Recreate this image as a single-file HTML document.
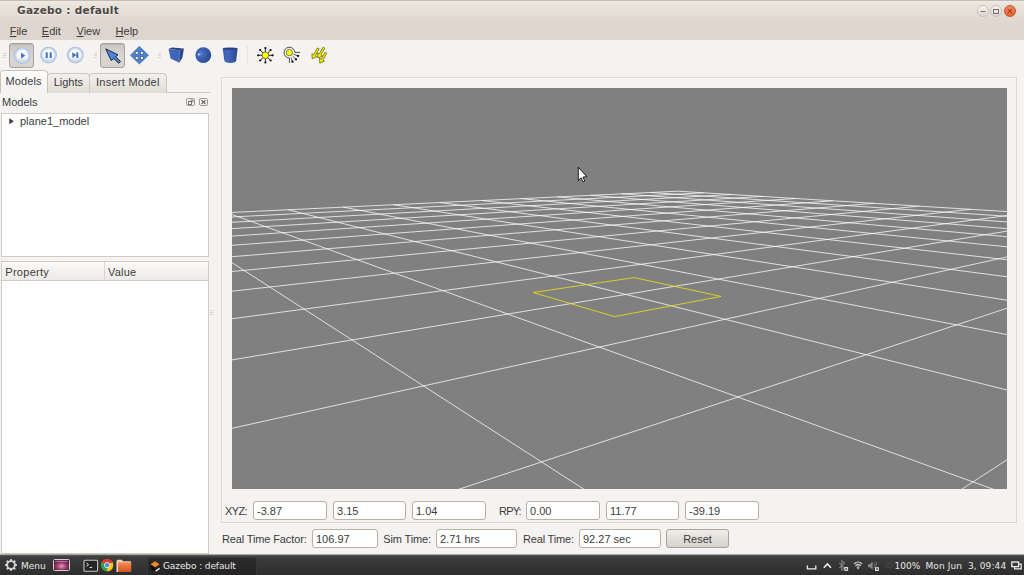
<!DOCTYPE html>
<html><head><meta charset="utf-8"><title>Gazebo : default</title>
<style>
*{box-sizing:border-box;margin:0;padding:0}
html,body{width:1024px;height:575px;overflow:hidden;background:#f4f3f1}
body{position:relative;font-family:"Liberation Sans",sans-serif;font-size:11px;color:#3c3c3c}
.a{position:absolute}
.t{position:absolute;white-space:pre;line-height:14px;height:14px}
#hdr{left:0;top:0;width:1024px;height:40px;background:linear-gradient(#bdb1a4 0,#cfc4b8 1px,#f4f2ee 1.6px,#eae7e0 2.6px,#e7e2da 8px,#e5ddd6 12px,#e0d8d1 19px,#dfd6cf 24px,#ded5ce 40px)}
#title{left:17px;top:3px;font-family:"DejaVu Sans","Liberation Sans",sans-serif;font-size:10.5px;letter-spacing:.28px;font-weight:bold;color:#4d4843;line-height:15px;height:15px;text-shadow:0 1px 0 rgba(255,255,255,.6)}
.mi{top:24px;color:#3c3c3c}
.mi u{text-decoration:underline;text-underline-offset:1px}
.wb{width:12px;height:12px;border-radius:50%;top:5.2px;border:1px solid #c9c2ba;background:linear-gradient(#f6f4f1,#dcd7d0)}
.btn{width:25px;height:25px;top:43px;border:1px solid #a8a29a;border-radius:3px;background:linear-gradient(#cbc7c2,#dad7d3 60%,#d6d3cf);box-shadow:inset 0 1px 1px rgba(0,0,0,.10)}
.grip{width:3px;height:6px;top:53px;background:repeating-linear-gradient(#d8d3cc 0,#d8d3cc 1px,transparent 1px,transparent 2px)}
.tab{top:73px;height:20px;border:1px solid #cfc8c0;border-bottom:none;border-radius:4px 4px 0 0;background:linear-gradient(#f2f0ed,#e9e6e1 55%,#dedad4)}
.tab.sel{top:70px;height:23px;background:linear-gradient(#fdfdfc,#f6f5f4 60%,#f4f3f1);border-color:#c9c2ba}
.box{background:#fff;border:1px solid #d2cbc3}
.inp{height:19px;border:1px solid #b9b0a6;border-radius:3px;background:#fff}
.inp span{position:absolute;left:3px;top:1.5px;line-height:14px;white-space:pre}
#vp{left:232px;top:88px;width:775px;height:401px;background:#808080;overflow:hidden}
.gl{position:absolute;left:0;top:0;display:block}
#tb{left:0;top:554px;width:1024px;height:21px;background:linear-gradient(#e4e3e1 0,#777675 .9px,#444 1.8px,#3c3c3c 4px,#2d2d2d 21px);font-family:"DejaVu Sans",sans-serif;font-size:9px;color:#e8e8e8}
#tb .t{line-height:12px;height:12px;top:6px}
</style></head><body>

<!-- header: title + menubar -->
<div class="a" id="hdr"></div>
<div class="t" id="title">Gazebo : default</div>
<div class="a wb" style="left:977px"><svg class="a" style="left:0;top:0" width="10" height="10"><path d="M2.5 5.5h5" stroke="#6b645c" stroke-width=".9" fill="none"/></svg></div>
<div class="a wb" style="left:990px"><svg class="a" style="left:0;top:0" width="10" height="10"><rect x="2.5" y="3.5" width="5" height="4" stroke="#6b645c" stroke-width=".9" fill="none"/></svg></div>
<div class="a wb" style="left:1004px;border-color:#c8532a;background:linear-gradient(#f08a5f,#e5602f)"><svg class="a" style="left:0;top:0" width="10" height="10"><path d="M2.7 2.7l4.6 4.6M7.3 2.7l-4.6 4.6" stroke="#8a3414" stroke-width=".9" fill="none"/></svg></div>
<div class="t mi" style="left:9.7px"><u>F</u>ile</div>
<div class="t mi" style="left:41.8px"><u>E</u>dit</div>
<div class="t mi" style="left:76.5px"><u>V</u>iew</div>
<div class="t mi" style="left:115.6px"><u>H</u>elp</div>

<!-- toolbar -->
<div class="a grip" style="left:3px"></div>
<div class="a btn" style="left:9px"></div>
<div class="a grip" style="left:94px"></div>
<div class="a btn" style="left:100px"></div>
<div class="a grip" style="left:158px"></div>
<div class="a" style="left:247px;top:46px;width:1px;height:18px;background:#e6e2dd"></div>
<svg class="a" style="left:0;top:40px" width="340" height="30" viewBox="0 40 340 30">
<defs>
<radialGradient id="gs" cx=".32" cy=".42" r=".75"><stop offset="0" stop-color="#5f86d6"/><stop offset=".25" stop-color="#4268bd"/><stop offset=".8" stop-color="#2f4d97"/><stop offset="1" stop-color="#27407f"/></radialGradient>
<linearGradient id="gc" x1="0" x2="1" y1="0" y2="0"><stop offset="0" stop-color="#3a5aa9"/><stop offset=".35" stop-color="#4468bd"/><stop offset="1" stop-color="#2c478d"/></linearGradient>
<linearGradient id="gb" x1="0" x2="0" y1="0" y2="1"><stop offset="0" stop-color="#ffffff"/><stop offset=".6" stop-color="#f4f6fa"/><stop offset="1" stop-color="#d5d9e0"/></linearGradient>
</defs>
<!-- play / pause / step round buttons -->
<g id="rb">
<circle cx="22.3" cy="55.6" r="7.9" fill="#d3dff1" stroke="#a9c1e6" stroke-width="1.1"/>
<circle cx="22.3" cy="55.6" r="6.3" fill="url(#gb)" stroke="#c3cbd8" stroke-width=".6"/>
</g>
<use href="#rb" x="26.2" y="-.5"/>
<use href="#rb" x="53" y="-.5"/>
<path d="M21.1 52.5L25.2 55.6L21.1 58.8z" fill="#3c73c4"/>
<path d="M45.7 52.2h2v5.9h-2zM49.7 52.2h2v5.9h-2z" fill="#3c73c4"/>
<path d="M72.3 52.2L76.4 55.1L72.3 58.1zM76.4 52.2h1.9v5.9h-1.9z" fill="#3c73c4"/>
<!-- select arrow -->
<path d="M105.8 48.9L118 54.8L115.6 56.8L120.6 61.5L118.7 63.2L113.8 58.6L111.1 60.5z" fill="#4a86d8" stroke="#1f2d45" stroke-width="1" stroke-linejoin="round"/>
<!-- move -->
<path d="M139.35 46.3L148.5 55.3L139.35 64L130.4 55.3z" fill="#4a84d4" stroke="#2f4f86" stroke-width=".5" stroke-linejoin="round"/>
<path d="M135.4 51.5h2.8v2.8h-2.8zM140.5 51.5h2.8v2.8h-2.8zM135.4 56.5h2.8v2.8h-2.8zM140.5 56.5h2.8v2.8h-2.8z" fill="#fff" stroke="#2c3e5f" stroke-width=".55"/>
<!-- box -->
<path d="M168.5 48.9L172 47.6L183.9 48.4L179.5 50.3z" fill="#2a4285"/>
<path d="M168.5 48.9L179.5 50.3L179.4 62.8L170.6 58.6z" fill="#4064b8"/>
<path d="M179.5 50.3L183.9 48.4L182.4 57.4L179.4 62.8z" fill="#2b458c"/>
<!-- sphere -->
<circle cx="203.3" cy="55.2" r="7.9" fill="url(#gs)"/>
<circle cx="198.8" cy="54.5" r="1" fill="#dfe8fa" fill-opacity=".9"/>
<!-- cylinder -->
<path d="M222.7 48.6L224.3 60.2Q224.6 62.9 230.2 63Q235.9 62.9 236.2 60.2L237.6 48.6z" fill="url(#gc)"/>
<ellipse cx="230.15" cy="48.7" rx="7.45" ry="1.3" fill="#2b4384"/>
<!-- point light -->
<g stroke="#111" stroke-width=".9" fill="none">
<path d="M257.9 55.3h15M265.4 47.8v15M260.1 50l10.6 10.6M270.7 50l-10.6 10.6"/>
</g>
<g fill="#111">
<circle cx="258.2" cy="55.3" r="1.1"/><circle cx="272.6" cy="55.3" r="1.1"/><circle cx="265.4" cy="48.1" r="1.1"/><circle cx="265.4" cy="62.5" r="1.1"/>
<circle cx="260.2" cy="50.1" r="1.1"/><circle cx="270.6" cy="50.1" r="1.1"/><circle cx="260.2" cy="60.5" r="1.1"/><circle cx="270.6" cy="60.5" r="1.1"/>
</g>
<circle cx="265.4" cy="55.3" r="3.3" fill="#ffff00" stroke="#333" stroke-width=".6"/>
<!-- spot light -->
<path d="M300 52.4H294.8A5.4 5.4 0 1 0 289.4 58V62.9" fill="none" stroke="#2e2e2e" stroke-width=".85"/>
<path d="M293.6 54.3L298.1 55.9M292.6 56.2L296 59.4M291 57.6L292.5 61.7" stroke="#222" stroke-width=".8" fill="none"/>
<circle cx="298.1" cy="55.9" r="1.15" fill="#111"/><circle cx="296" cy="59.4" r="1.15" fill="#111"/><circle cx="292.5" cy="61.7" r="1.15" fill="#111"/>
<circle cx="289.4" cy="52.6" r="3.2" fill="#ffff00" stroke="#333" stroke-width=".6"/>
<!-- directional light -->
<g id="da" fill="#f4f000" stroke="#5a5800" stroke-width=".7" stroke-linejoin="round">
<path d="M317.5 47.9L319.2 48.9L315.3 55.6L316.9 56.6L312.2 58.8L311.9 53.7L313.6 54.7z"/>
</g>
<use href="#da" x="5.6" y="-.8"/>
<use href="#da" x="7.6" y="4.4"/>

</svg>

<!-- tabs -->
<div class="a" style="left:0;top:92px;width:210px;height:1px;background:#cfc8c0"></div>
<div class="a tab" style="left:47px;width:43px"></div>
<div class="a tab" style="left:89px;width:78px"></div>
<div class="a tab sel" style="left:0;width:48px"></div>
<div class="t" style="left:5.5px;top:74px;letter-spacing:.1px">Models</div>
<div class="t" style="left:53.7px;top:75px">Lights</div>
<div class="t" style="left:96px;top:75px;letter-spacing:.26px">Insert Model</div>

<!-- dock -->
<div class="t" style="left:2px;top:95px">Models</div>
<svg class="a" style="left:186px;top:98px" width="23" height="9"><rect x=".5" y=".5" width="8" height="7" rx="1.5" fill="#f9f8f7" stroke="#a19b94"/><rect x="2.5" y="3.5" width="3" height="3" fill="none" stroke="#6b655e" stroke-width=".9"/><path d="M4.5 2.2h2.5v2.3" fill="none" stroke="#6b655e" stroke-width=".9"/><rect x="13.5" y=".5" width="8" height="7" rx="1.5" fill="#f9f8f7" stroke="#a19b94"/><path d="M15.5 2.2l4 3.8M19.5 2.2l-4 3.8" stroke="#625d57" stroke-width="1.1"/></svg>
<div class="a box" style="left:1px;top:113px;width:208px;height:144px"></div>
<svg class="a" style="left:9px;top:118px" width="6" height="7"><path d="M.3 .3L4.8 3.2L.3 6.2z" fill="#3c3c3c"/></svg>
<div class="t" style="left:20px;top:114px">plane1_model</div>

<!-- property table -->
<div class="a box" style="left:1px;top:261px;width:208px;height:293px"></div>
<div class="a" style="left:2px;top:262px;width:206px;height:19px;background:linear-gradient(#fbfaf9,#edeae6);border-bottom:1px solid #d2cbc3"></div>
<div class="a" style="left:104px;top:262px;width:1px;height:18px;background:#d9d3cc"></div>
<div class="t" style="left:5.3px;top:264.5px;letter-spacing:.28px">Property</div>
<div class="t" style="left:108px;top:264.5px;letter-spacing:.2px">Value</div>
<div class="a grip" style="left:210px;top:310px;width:3px"></div>

<!-- render frame -->
<div class="a" style="left:221px;top:77px;width:796px;height:446px;border:1px solid #dbd7d2;box-shadow:inset 1px 1px 0 #fbfaf9"></div>
<div class="a" id="vp"><svg class="gl" width="775" height="401" viewBox="0 0 775 401"><path d="M795.0 124.8L445.7 103.2M795.0 129.6L418.6 104.5M795.0 135.4L389.6 105.8M795.0 142.2L358.5 107.3M795.0 150.5L325.1 108.9M795.0 160.8L289.0 110.6M795.0 174.0L250.0 112.5M795.0 358.7L699.5 421.0M795.0 191.4L207.6 114.5M795.0 213.6L167.1 421.0M795.0 215.3L161.5 116.7M795.0 164.5L-20.0 344.7M795.0 250.4L111.2 119.1M795.0 139.8L-20.0 275.2M795.0 307.0L55.9 121.7M795.0 124.9L-20.0 233.4M795.0 413.4L-5.1 124.7M738.4 121.3L-20.0 205.4M382.7 421.0L-20.0 161.8M687.4 118.1L-20.0 185.4M641.9 115.3L-20.0 170.4M600.9 112.8L-20.0 158.8M563.9 110.5L-20.0 149.4M530.3 108.4L-20.0 141.8M499.6 106.5L-20.0 135.4M471.5 104.8L-20.0 130.0M445.7 103.2L-20.0 125.4" fill="none" stroke="#fff" stroke-width=".9" stroke-opacity=".84"/><path d="M301.1 204.5L402.2 189.6M402.2 189.6L489.0 208.4M489.0 208.4L382.6 228.6M382.6 228.6L301.1 204.5" fill="none" stroke="#e6de10" stroke-width=".9" stroke-opacity=".95"/></svg>
</div>

<svg class="a" style="left:570px;top:160px" width="24" height="28" viewBox="570 160 24 28"><path d="M578.3 167.2V180.5L581.1 177.8L583 181.9L584.8 181.1L582.9 177.1L586.8 176.7z" fill="#fff" stroke="#0a0a0a" stroke-width=".9" stroke-linejoin="round"/></svg>

<!-- pose row -->
<div class="t" style="left:225px;top:503.5px;letter-spacing:-.6px">XYZ:</div>
<div class="a inp" style="left:253px;top:501px;width:74px"><span>-3.87</span></div>
<div class="a inp" style="left:333px;top:501px;width:73px"><span>3.15</span></div>
<div class="a inp" style="left:412px;top:501px;width:74px"><span>1.04</span></div>
<div class="t" style="left:499px;top:503.5px;letter-spacing:-.8px">RPY:</div>
<div class="a inp" style="left:526px;top:501px;width:74px"><span>0.00</span></div>
<div class="a inp" style="left:606px;top:501px;width:73px"><span>11.77</span></div>
<div class="a inp" style="left:685px;top:501px;width:74px"><span>-39.19</span></div>

<!-- time row -->
<div class="t" style="left:222px;top:532px;letter-spacing:-.13px">Real Time Factor:</div>
<div class="a inp" style="left:312px;top:529px;width:66px"><span>106.97</span></div>
<div class="t" style="left:383.3px;top:532px;letter-spacing:-.15px">Sim Time:</div>
<div class="a inp" style="left:436px;top:529px;width:81px"><span>2.71 hrs</span></div>
<div class="t" style="left:523px;top:532px;letter-spacing:-.18px">Real Time:</div>
<div class="a inp" style="left:579px;top:529px;width:82px"><span>92.27 sec</span></div>
<div class="a" style="left:666px;top:529px;width:63px;height:19px;border:1px solid #a9a299;border-radius:3px;background:linear-gradient(#efedea,#d6d1cb);text-align:center;line-height:18px">Reset</div>

<!-- taskbar -->
<div class="a" id="tb">
<div class="a" style="left:147px;top:3px;width:110px;height:18px;background:linear-gradient(#2b2b2b,#242424);border-radius:3px 3px 0 0;border:1px solid #383838;border-bottom:none"></div>
<div class="t" style="left:21px">Menu</div>
<div class="t" style="left:163px;letter-spacing:-.1px">Gazebo : default</div>
<div class="t" style="left:894.5px">100%</div>
<div class="t" style="left:925.5px;letter-spacing:.1px">Mon Jun  3, 09:44</div>
<svg class="a" style="left:0;top:0" width="1024" height="21" viewBox="0 554 1024 21">
<defs>
<radialGradient id="gd" cx=".5" cy=".6" r=".7"><stop offset="0" stop-color="#e3a1bf"/><stop offset=".35" stop-color="#a84b79"/><stop offset=".75" stop-color="#5e1d40"/><stop offset="1" stop-color="#3a0f26"/></radialGradient>
<linearGradient id="gf" x1="0" x2="0" y1="0" y2="1"><stop offset="0" stop-color="#f3905a"/><stop offset="1" stop-color="#d8501b"/></linearGradient>
</defs>
<!-- gear -->
<g transform="translate(11 565)">
<g fill="#cfcfcf"><rect x="-.9" y="-6" width="1.8" height="12"/><rect x="-.9" y="-6" width="1.8" height="12" transform="rotate(45)"/><rect x="-.9" y="-6" width="1.8" height="12" transform="rotate(90)"/><rect x="-.9" y="-6" width="1.8" height="12" transform="rotate(135)"/></g>
<circle r="3.9" fill="none" stroke="#d4d4d4" stroke-width="1.9"/><circle r="2.9" fill="#343434"/>
</g>
<!-- show desktop -->
<rect x="53.5" y="559.5" width="16" height="11" rx="1" fill="url(#gd)" stroke="#e4dfe2" stroke-width=".9"/>
<path d="M55 561.3h13" stroke="#e9b9cf" stroke-width=".8" stroke-opacity=".8"/>
<!-- terminal -->
<rect x="84" y="560.2" width="13.6" height="11" rx="1" fill="#242424" stroke="#c4c4c4" stroke-width="1.1"/>
<path d="M86.5 563l2 1.6l-2 1.6M89.6 567.4h2.6" stroke="#fff" stroke-width=".9" fill="none"/>
<!-- chrome -->
<g transform="translate(107.1 565.1)">
<circle r="6.2" fill="#e03c2e"/>
<path d="M0 0L-5.37 -3.1A6.2 6.2 0 0 0 0 6.2z" fill="#2ea24c"/>
<path d="M0 0L0 6.2A6.2 6.2 0 0 0 5.37 -3.1z" fill="#f6c915"/>
<path d="M0 0L5.37 -3.1A6.2 6.2 0 0 0 -5.37 -3.1z" fill="#e03c2e"/>
<circle r="2.9" fill="#f2f2f2"/><circle r="2.2" fill="#4a8ce8"/>
</g>
<!-- folder -->
<path d="M116.7 560.6q0-.9 .9-.9h4.2l1.2 1.6h7.2q.9 0 .9 .9v9.6h-14.4z" fill="#f6cdb0"/>
<path d="M118 562.3h13.1v9.8h-13.1z" fill="url(#gf)"/>
<path d="M116.7 561.5h1.3v10.6h-1.3z" fill="#f3dccb"/>
<!-- gazebo icon -->
<path d="M150.6 564.2L155 561.2L159.6 564.2L155 567.2z" fill="#f28a1e"/>
<path d="M150.6 564.8L155 567.8V571.6L150.6 568.6z" fill="#0c0c0c"/>
<path d="M155.6 571.2L159.6 568.4" stroke="#f2f2f2" stroke-width="1.3"/>
<!-- tray -->
<path d="M807.4 565.6v3.3h8.4v-3.3" stroke="#f0f0f0" stroke-width="1.3" fill="none"/>
<path d="M823.8 567.8l3.6-3.9l3.6 3.9" stroke="#f0f0f0" stroke-width="1.5" fill="none"/>
<path d="M839.3 563l5.2 5l-2.7 2.4v-9.8l2.7 2.4l-5.2 5" stroke="#7d7d7d" stroke-width="1.1" fill="none"/>
<rect x="844.3" y="567" width="3.8" height="3.8" fill="#e8e8e8"/><path d="M845.2 567.9l2 2M847.2 567.9l-2 2" stroke="#333" stroke-width=".7"/>
<g fill="none" stroke="#cfcfcf" stroke-linecap="round"><path d="M854.6 563.6a5 5 0 0 1 7 0" stroke-width="1.4"/><path d="M855.9 565.5a3.2 3.2 0 0 1 4.4 0" stroke-width="1.3"/><path d="M857.2 567.2a1.4 1.4 0 0 1 1.8 0" stroke-width="1.2"/></g><circle cx="858.1" cy="568.6" r=".8" fill="#cfcfcf"/>
<path d="M868 564.2h2l2.6-2.6v8.2l-2.6-2.6h-2z" fill="#8a8a8a"/>
<path d="M874 563.2a3.6 3.6 0 0 1 0 4.8M875.6 561.6a5.6 5.6 0 0 1 .9 4" stroke="#7a7a7a" stroke-width="1" fill="none"/>
<rect x="875" y="567.2" width="3.8" height="3.8" fill="#e8e8e8"/><path d="M875.9 568.1l2 2M877.9 568.1l-2 2" stroke="#333" stroke-width=".7"/>
<rect x="885.6" y="563.8" width="6.8" height="3.4" rx=".8" fill="none" stroke="#4c4c4c" stroke-width=".9"/>
<!-- workspace -->
<path d="M1014.6 566.6v2.2h6.6v-4.6h-2" stroke="#f0f0f0" stroke-width="1.2" fill="none"/>
<rect x="1011.8" y="562" width="6.8" height="4.6" fill="none" stroke="#f4f4f4" stroke-width="1.3"/>
</svg>

</div>
</body></html>
